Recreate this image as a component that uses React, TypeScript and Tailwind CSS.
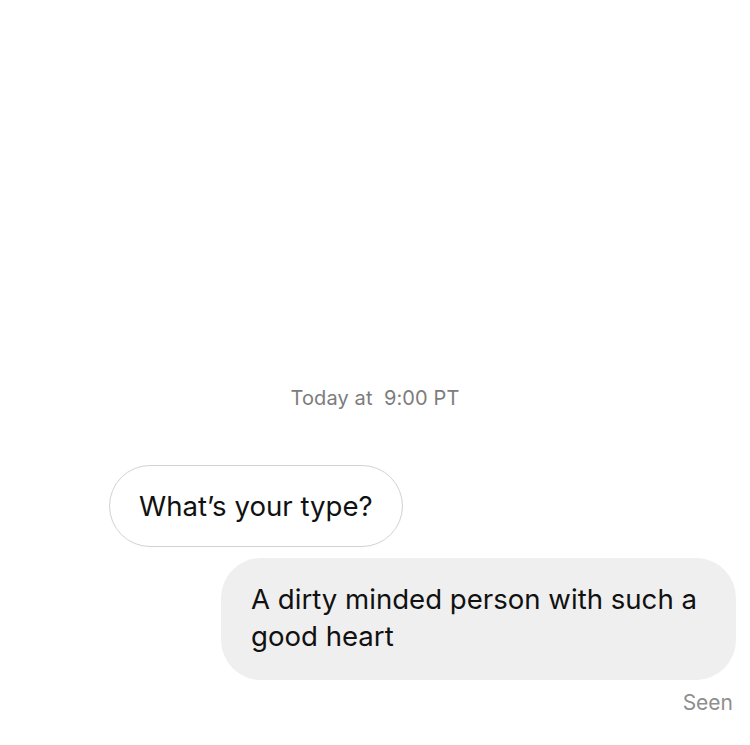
export default function App() {
  return (
    <div
      className="w-[750px] h-[745px] bg-white flex flex-col overflow-hidden"
      style={{ fontFamily: 'Inter, "Liberation Sans", sans-serif' }}
    >
      {/* timestamp */}
      <p className="pt-[386px] text-center text-[20px] leading-[24px] text-[#7c7c7c] whitespace-pre tracking-[0.1px]">
        Today at  9:00 PT
      </p>

      {/* incoming */}
      <div className="mt-[55px] ml-[109px] w-[294px] h-[82px] rounded-full border-[1.5px] border-[#d2d2d2] flex items-center px-[29px]">
        <p className="text-[27.6px] leading-[37px] text-[#111]">What’s your type?</p>
      </div>

      {/* outgoing */}
      <div className="mt-[11px] ml-auto mr-[14px] w-[515px] rounded-[40px] bg-[#efefef] pl-[30px] pr-[30px] pt-[23px] pb-[25px]">
        <p className="text-[27.6px] leading-[37px] text-[#111]">
          A dirty minded person with such a good heart
        </p>
      </div>

      <p className="mt-[10px] ml-auto mr-[17px] text-[21px] leading-[25px] text-[#8e8e8e]">Seen</p>
    </div>
  );
}
